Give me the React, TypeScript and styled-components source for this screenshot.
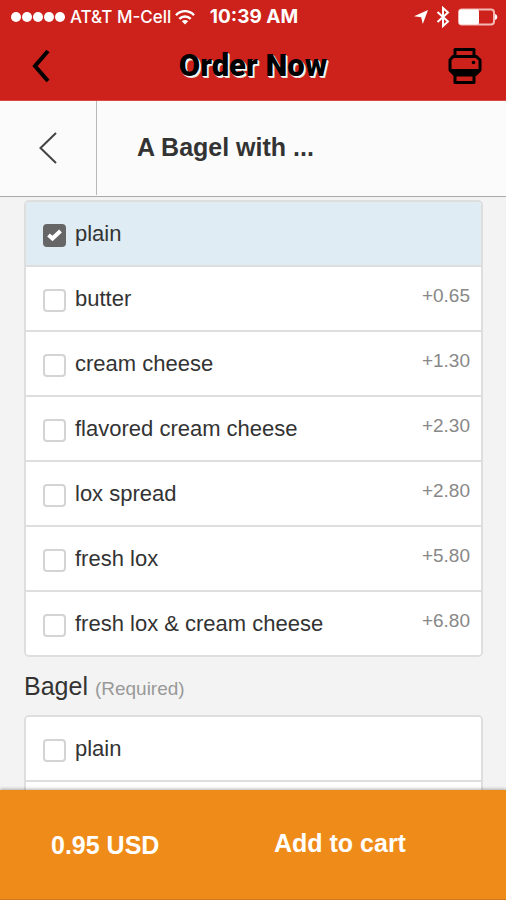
import React, { useState } from "react";
import styled, { createGlobalStyle } from "styled-components";

const GlobalStyle = createGlobalStyle`
  *, *::before, *::after { box-sizing: border-box; }
  body {
    margin: 0;
    background: #f3f3f3;
    color: #333;
    font-family: "Liberation Sans", Arial, Helvetica, sans-serif;
  }
`;

const Screen = styled.div`
  display: flex;
  flex-direction: column;
  height: 100vh;
`;

const Header = styled.header`
  flex: none;
  background: #cc221b;
  border-bottom: 1px solid #d9493f;
`;

const StatusBar = styled.div`
  display: grid;
  grid-template-columns: 1fr auto 1fr;
  align-items: center;
  height: 34px;
  padding: 0 8px 0 10px;
  color: #fff;
  font-family: Inter, "Liberation Sans", sans-serif;
  font-size: 17px;
  line-height: 20px;
`;

const Carrier = styled.div`
  display: flex;
  align-items: center;
  gap: 4px;
  font-weight: 500;
  white-space: nowrap;
`;

const Clock = styled.time`
  font-weight: 700;
  font-size: 19px;
`;

const Indicators = styled.div`
  display: flex;
  align-items: center;
  justify-content: flex-end;
  gap: 8px;
`;

const NavBar = styled.div`
  display: grid;
  grid-template-columns: 82px 1fr 82px;
  align-items: center;
  height: 66px;
  padding-bottom: 2px;
`;

const IconButton = styled.button`
  display: flex;
  align-items: center;
  justify-content: center;
  height: 100%;
  padding: 0;
  border: 0;
  background: none;
  color: #000;
  cursor: pointer;
`;

const Brand = styled.h1`
  margin: 0;
  color: #000;
  font-family: Roboto, "Liberation Sans", sans-serif;
  font-size: 31px;
  font-weight: 900;
  line-height: 32px;
  text-align: center;
  text-shadow: 1px 1px 0 #fff, 2px 2px 0 #e8dcda;
  white-space: nowrap;
`;

const TitleBar = styled.div`
  display: flex;
  flex: none;
  height: 96px;
  padding-bottom: 1px;
  border-bottom: 1px solid #a9a9a9;
  background: #fbfbfb;
`;

const BackButton = styled(IconButton)`
  width: 97px;
  border-right: 1px solid #b9b9b9;
  color: #444;
`;

const Title = styled.h2`
  flex: 1;
  margin: 0;
  padding: 0 40px 2px;
  align-self: center;
  font-size: 25px;
  line-height: 30px;
`;

const Content = styled.main`
  flex: 1;
  min-height: 0;
  padding: 3px 23px 0 24px;
  overflow-y: auto;
  scrollbar-width: none;
`;

const Group = styled.fieldset`
  min-width: 0;
  margin: 0;
  padding: 0;
  border: 0;
`;

const GroupLabel = styled.legend`
  padding: 15px 0;
  font-size: 25px;
  line-height: 28px;
`;

const Hint = styled.small`
  color: #999;
  font-size: 19px;
  line-height: 20px;
`;

const Options = styled.div`
  border: 2px solid #dedede;
  border-radius: 5px;
  background: #fff;
  overflow: hidden;
`;

const Option = styled.label<{ $selected: boolean }>`
  display: flex;
  align-items: center;
  gap: 9px;
  height: 65px;
  padding: 0 11px 0 17px;
  border-bottom: 2px solid #dedede;
  background: ${(p) => (p.$selected ? "#dfecf3" : "#fff")};
  font-size: 22px;
  line-height: 26px;
  cursor: pointer;

  &:last-child {
    height: 63px;
    border-bottom: 0;
  }
`;

const Tick = styled.span`
  display: grid;
  flex: none;
  place-items: center;
  padding-top: 3px;

  > * { grid-area: 1 / 1; }
  > svg { pointer-events: none; }
`;

const Checkbox = styled.input`
  appearance: none;
  width: 23px;
  height: 23px;
  margin: 0;
  border: 2px solid #d4d4d4;
  border-radius: 4px;
  background: #fff;

  &:checked {
    border-color: #666;
    background: #666;
  }
`;

const Name = styled.span`
  flex: 1;
`;

const Price = styled.span`
  padding-bottom: 6px;
  color: #888;
  font-size: 19px;
`;

const Footer = styled.footer`
  display: grid;
  flex: none;
  grid-template-columns: 250px 1fr;
  align-items: center;
  height: 110px;
  border-bottom: 1px solid #d07a1c;
  background: #ef8c19;
  box-shadow: 0 -1px 3px rgba(0, 0, 0, 0.3);
  color: #fff;
  font-size: 25px;
  font-weight: 700;
  line-height: 30px;
  z-index: 1;
`;

const Total = styled.output`
  padding-left: 51px;
`;

const CartButton = styled.button`
  height: 100%;
  padding: 0 24px 4px;
  border: 0;
  background: none;
  color: inherit;
  font: inherit;
  text-align: left;
  cursor: pointer;
`;

const SignalDots = () => (
  <svg width="56" height="12" viewBox="0 0 56 12" fill="#fff" aria-hidden="true">
    {[6, 17, 28, 39, 50].map((x) => (
      <circle key={x} cx={x} cy="6" r="5" />
    ))}
  </svg>
);

const Wifi = () => (
  <svg width="20" height="15" viewBox="0 0 20 15" fill="none" stroke="#fff" strokeWidth="2.4" aria-hidden="true">
    <path d="M1 5.2C6-0.2 14-0.2 19 5.2" />
    <path d="M4.300 8.900C7.500 5.600 12.500 5.600 15.700 8.900" />
    <path d="M10 14.500 6.800 11.200C8.700 9.500 11.300 9.500 13.200 11.200Z" fill="#fff" stroke="none" />
  </svg>
);

const Location = () => (
  <svg width="14" height="14" viewBox="0 0 14 14" fill="#fff" aria-hidden="true">
    <path d="M14 0 8.8 14 7.2 7.2 0 6.2Z" />
  </svg>
);

const Bluetooth = () => (
  <svg width="14" height="22" viewBox="0 0 14 22" fill="none" stroke="#fff" strokeWidth="2" aria-hidden="true">
    <path d="M1.5 6 12 15.5 7 20V2L12 6.5 1.5 16" />
  </svg>
);

const Battery = () => (
  <svg width="40" height="18" viewBox="0 0 40 18" aria-hidden="true">
    <rect x="1" y="1.5" width="35" height="15" rx="3" fill="none" stroke="#f3b9b5" strokeWidth="2" />
    <rect x="1" y="1.5" width="20" height="15" rx="2" fill="#fff" />
    <path d="M37 6C40 6.5 40 11.5 37 12Z" fill="#fff" />
  </svg>
);

const BoldChevron = () => (
  <svg width="18" height="34" viewBox="0 0 18 34" fill="none" stroke="#000" strokeWidth="4" aria-hidden="true">
    <path d="M16 2 3 17 16 32" />
  </svg>
);

const ThinChevron = () => (
  <svg width="18" height="32" viewBox="0 0 18 32" fill="none" stroke="currentColor" strokeWidth="2" aria-hidden="true">
    <path d="M17 1 1.5 16 17 31" />
  </svg>
);

const Printer = () => (
  <svg width="34" height="36" viewBox="0 0 34 36" fill="none" stroke="#000" strokeWidth="3" strokeLinejoin="round" aria-hidden="true">
    <path d="M7 8V1.5H26V8" />
    <path d="M7 26H6L2 22V12L5 8.500H28.500L32 12V22L28 26H27" />
    <path d="M1 21H33V23L28 28H6L1 23Z" fill="#000" stroke="none" />
    <path d="M7 27V34.500H26V27Z" fill="#cc221b" />
    <circle cx="25.500" cy="14.500" r="1.800" fill="#000" stroke="none" />
  </svg>
);

const CheckMark = () => (
  <svg width="15" height="13" viewBox="0 0 15 13" fill="none" stroke="#fff" strokeWidth="4" aria-hidden="true">
    <path d="M1.500 6 5.500 9.500 13.500 2" />
  </svg>
);

type Item = { name: string; price?: string };

const spreads: Item[] = [
  { name: "plain" },
  { name: "butter", price: "+0.65" },
  { name: "cream cheese", price: "+1.30" },
  { name: "flavored cream cheese", price: "+2.30" },
  { name: "lox spread", price: "+2.80" },
  { name: "fresh lox", price: "+5.80" },
  { name: "fresh lox & cream cheese", price: "+6.80" },
];

const bagels: Item[] = [{ name: "plain" }, { name: "" }];

function OptionList({ items, initial }: { items: Item[]; initial?: string }) {
  const [selected, setSelected] = useState<string | undefined>(initial);
  return (
    <Options>
      {items.map(({ name, price }) => {
        const checked = name === selected;
        return (
          <Option key={name} $selected={checked}>
            <Tick>
              <Checkbox
                type="checkbox"
                checked={checked}
                onChange={() => setSelected(checked ? undefined : name)}
              />
              {checked && <CheckMark />}
            </Tick>
            <Name>{name}</Name>
            {price && <Price>{price}</Price>}
          </Option>
        );
      })}
    </Options>
  );
}

export default function App() {
  return (
    <Screen>
      <GlobalStyle />
      <Header>
        <StatusBar>
          <Carrier>
            <SignalDots />
            <span>AT&amp;T M-Cell</span>
            <Wifi />
          </Carrier>
          <Clock>10:39 AM</Clock>
          <Indicators>
            <Location />
            <Bluetooth />
            <Battery />
          </Indicators>
        </StatusBar>
        <NavBar>
          <IconButton aria-label="Back">
            <BoldChevron />
          </IconButton>
          <Brand>Order Now</Brand>
          <IconButton aria-label="Print">
            <Printer />
          </IconButton>
        </NavBar>
      </Header>
      <TitleBar>
        <BackButton aria-label="Previous">
          <ThinChevron />
        </BackButton>
        <Title>A Bagel with ...</Title>
      </TitleBar>
      <Content>
        <Group aria-label="Spread">
          <OptionList items={spreads} initial="plain" />
        </Group>
        <Group>
          <GroupLabel>
            Bagel <Hint>(Required)</Hint>
          </GroupLabel>
          <OptionList items={bagels} />
        </Group>
      </Content>
      <Footer>
        <Total>0.95 USD</Total>
        <CartButton>Add to cart</CartButton>
      </Footer>
    </Screen>
  );
}
